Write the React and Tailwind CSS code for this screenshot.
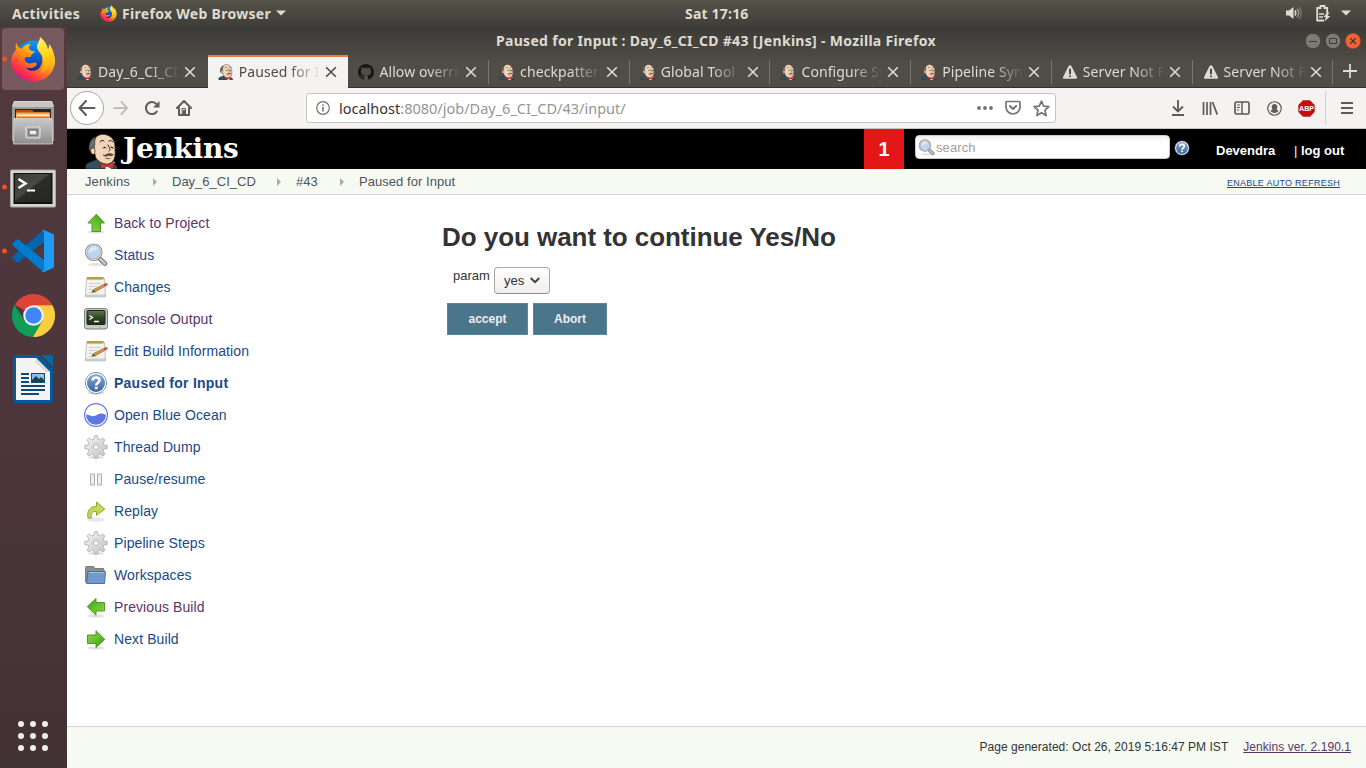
import React from "react";

const ubuntu = "font-['Noto_Sans','Open_Sans',sans-serif]";

function Firefox({ size, id }) {
  return (
    <svg width={size} height={size} viewBox="0 0 46 46">
      <defs>
        <linearGradient id={id + "a"} x1="0.85" y1="0.1" x2="0.2" y2="0.95">
          <stop offset="0" stopColor="#fff44f" />
          <stop offset="0.3" stopColor="#ffb418" />
          <stop offset="0.55" stopColor="#ff7a1c" />
          <stop offset="0.78" stopColor="#ff3647" />
          <stop offset="1" stopColor="#d8108c" />
        </linearGradient>
        <linearGradient id={id + "b"} x1="0.5" y1="0" x2="0.5" y2="1">
          <stop offset="0" stopColor="#0a9bff" />
          <stop offset="0.6" stopColor="#0a53c8" />
          <stop offset="1" stopColor="#2b1a78" />
        </linearGradient>
        <linearGradient id={id + "c"} x1="0.3" y1="0" x2="0.5" y2="1">
          <stop offset="0" stopColor="#fff36b" />
          <stop offset="0.55" stopColor="#ffd21c" />
          <stop offset="1" stopColor="#ff9a12" />
        </linearGradient>
      </defs>
      <circle cx="23" cy="21" r="16.5" fill={`url(#${id}b)`} />
      <path fill={`url(#${id}a)`} d="M6 7c-1 3 0 5 0 7C2.500 17.500 1 22 1 26c1 11 11 19.500 22.500 19.500C36 45.500 45 36 45 24.500c0-6-3-10-5-12l-9 3c2 5 2 13-2 17-4 3.500-11 3-13-1 4 1 7 1 10-2 1-1 1-3-1-3-3 0-5 2-8 0-2-1-3-3-2-5 2-1 4 0 6-1 0-3 3-3 4-5-3 0-5-1-6-3-1-2 1-3 2-4-4-1-7 1-9 4-2 0-4-1-6-6z" />
      <path fill={`url(#${id}c)`} d="M30 1c0 4-3 6-3 10 0 3 3 5 5 9 3 6 2 12-2 17 7-1 13-8 14-16 0-6-3-11-5-13 0 3 0 4-1 5-1-5-4-9-8-12z" />
    </svg>
  );
}

function Butler({ w, h, className = "" }) {
  return (
    <svg width={w} height={h} viewBox="0 0 34 36" className={className}>
      <path fill="#335061" stroke="#1b2a33" strokeWidth="0.8" d="M1 36c-1-3 0-5 2-6l10-4 16 5c3 1 3 3 3 5z" />
      <path fill="#f0f0ee" d="M14 28l7 8h5l4-7-8-2z" />
      <path fill="#f0d6b7" stroke="#3a2a20" strokeWidth="0.9" d="M8 8c3-6 9-8 14-6 6 2 8 7 8 12 0 6 1 10-2 14-3 4-8 4-13 1-3-2-5-4-5-8-3 0-5-2-4-5 0-3 1-5 2-8z" />
      <path fill="#6d6b6d" stroke="#2f2f2f" strokeWidth="0.7" d="M11 4C7 5 4 9 4 15c0 2 1 3 2 4 0-2 0-4 2-4l1 1c1-2 0-3 1-5-1-2 0-4 1-7z" />
      <path fill="#f0d6b7" stroke="#3a2a20" strokeWidth="0.7" d="M6 16c2-2 4-1 4 2 0 2-1 4-3 3-1-1-2-3-1-5z" />
      <path fill="none" stroke="#302520" strokeWidth="1" strokeLinecap="round" d="M15 9c1-2 3-2 4-1M24 8c2-1 3 0 4 1M18 15c1-1 2-1 3 0M26 14l2 1M23 12c2 4 3 5 1 6" />
      <circle cx="19.500" cy="14.500" r="0.800" fill="#222" />
      <circle cx="27" cy="14.500" r="0.800" fill="#222" />
      <path fill="#6a4a38" stroke="#302520" strokeWidth="0.500" d="M18 22c3 1 4-1.500 6.500-1.500 2 0 2.500 1 4 1-1.500 1.500-3.500 1.500-5 .7-1.500 1.300-4 1.300-5.500-.2z" />
      <path fill="none" stroke="#80302a" strokeWidth="0.900" d="M20.500 25c2 1 3.500 1 5 0" />
      <path fill="#d33833" stroke="#5d1512" strokeWidth="0.7" d="M16 30l6 2 6-3c1 2 1 5 0 7l-6-3-5 3c-2-2-2-4-1-6z" />
    </svg>
  );
}

function GitHub() {
  return (
    <svg width="16" height="16" viewBox="0 0 16 16">
      <path fill="#191717" d="M8 0C3.580 0 0 3.580 0 8c0 3.540 2.290 6.530 5.470 7.590.4.070.55-.17.55-.38 0-.19-.01-.82-.01-1.490-2.010.37-2.530-.49-2.690-.94-.09-.23-.48-.94-.82-1.130-.28-.15-.68-.52-.01-.53.63-.01 1.080.58 1.230.82.72 1.210 1.870.87 2.330.66.070-.52.28-.87.51-1.070-1.780-.2-3.640-.89-3.640-3.950 0-.87.31-1.590.82-2.150-.08-.2-.36-1.020.08-2.120 0 0 .67-.21 2.200.82.64-.18 1.320-.27 2-.27s1.360.09 2 .27c1.530-1.040 2.200-.82 2.200-.82.44 1.100.16 1.920.08 2.120.51.56.82 1.270.82 2.150 0 3.070-1.870 3.750-3.650 3.950.29.25.54.73.54 1.480 0 1.070-.01 1.930-.01 2.200 0 .21.15.46.55.38A8.010 8.010 0 0 0 16 8c0-4.420-3.580-8-8-8z" />
    </svg>
  );
}

function Warn() {
  return (
    <svg width="16" height="16" viewBox="0 0 16 16">
      <path fill="#dfdbd2" d="M8 1.200c.7 0 1.100.4 1.400.9l5.400 10.600c.6 1.200 0 2.100-1.200 2.100H2.400c-1.200 0-1.800-.9-1.200-2.100L6.600 2.100c.3-.5.700-.9 1.400-.9z" />
      <path stroke="#4a4842" strokeWidth="2" strokeLinecap="round" d="M8 5.500v4M8 12.200v.1" />
    </svg>
  );
}

function Tab({ icon, text, active, beforeActive }) {
  return (
    <div
      className={
        "relative flex h-[33px] w-[140.700px] shrink-0 items-center pl-[10px] " +
        (active ? "border-t-2 border-[#f07746] bg-[#f4f3f2] pb-[2px] text-[#4c4c4c]" : "border-b border-[#33322e] pt-px text-[#dfdbd2]")
      }
    >
      <div className="flex w-[21px] shrink-0 items-center">{icon}</div>
      <div className="w-[82px] overflow-hidden whitespace-nowrap text-[14px] leading-5 tracking-[0.1px] [mask-image:linear-gradient(to_right,black_50px,transparent_82px)]">
        {text}
      </div>
      <svg width="12" height="12" viewBox="0 0 12 12" className="ml-[4px] shrink-0" fill="none" stroke="currentColor" strokeWidth="1.600">
        <path d="M1.200 1.200l9.600 9.600M10.800 1.200L1.200 10.800" />
      </svg>
      {!active && !beforeActive && <div className="absolute right-0 top-[5px] h-[24px] w-px bg-[#77756f]" />}
    </div>
  );
}

const tabs = [
  { t: "Day_6_CI_CD", i: "j", beforeActive: true },
  { t: "Paused for In", i: "j", active: true },
  { t: "Allow overrid", i: "g" },
  { t: "checkpattern", i: "j" },
  { t: "Global Tool", i: "j" },
  { t: "Configure Sy", i: "j" },
  { t: "Pipeline Syn", i: "j" },
  { t: "Server Not F", i: "w" },
  { t: "Server Not F", i: "w" },
];

function TopBar() {
  return (
    <div className={"flex h-[27px] shrink-0 items-center bg-linear-to-b from-[#57534a] to-[#3e3d38] pb-px text-[14px] font-bold text-[#dfdbd2] " + ubuntu}>
      <div className="w-[100px] pl-[12px] tracking-[0.300px]">Activities</div>
      <Firefox size={17} id="ft" />
      <div className="ml-[5px] w-[149px] whitespace-nowrap tracking-[0.300px]">Firefox Web Browser</div>
      <svg width="10" height="6" viewBox="0 0 10 6" className="ml-[5px]"><path fill="#dfdbd2" d="M0 .5h10L5 5.500z" /></svg>
      <div className="ml-[399px] whitespace-nowrap tracking-[0.200px]">Sat 17:16</div>
      <div className="ml-auto flex items-center pr-[15px]">
        <svg width="16" height="14" viewBox="0 0 16 14" fill="none">
          <path fill="#dfdbd2" d="M0 4.500h3L7.500 1v12L3 9.500H0z" />
          <path stroke="#dfdbd2" strokeWidth="1.500" d="M9 4.500c1 1.500 1 3.500 0 5" />
          <path stroke="#aaa79f" strokeWidth="1.300" d="M11 2.800c2 2.500 2 6 0 8.400" />
          <path stroke="#7d7a73" strokeWidth="1.300" d="M13.200 1c2.600 3.500 2.600 8.500 0 12" />
        </svg>
        <svg width="15" height="17" viewBox="0 0 15 17" className="ml-[14px]" fill="none">
          <path stroke="#dfdbd2" strokeWidth="1.800" d="M11.200 8V3H8.500V1h-4v2H1.200v12.500H8" />
          <path stroke="#dfdbd2" strokeWidth="1.500" d="M3 9h5M3 12h4" />
          <path fill="#dfdbd2" d="M11 7.500L7.500 12h2.300L8.500 16.500 14.500 11h-3l1.800-3.500z" />
        </svg>
        <svg width="10" height="6" viewBox="0 0 10 6" className="ml-[10px]"><path fill="#dfdbd2" d="M0 .5h10L5 5.500z" /></svg>
      </div>
    </div>
  );
}

function Files() {
  return (
    <svg width="44" height="46" viewBox="0 0 44 46">
      <defs>
        <linearGradient id="fg" x1="0" y1="0" x2="0" y2="1"><stop offset="0" stopColor="#c9c9c9" /><stop offset="1" stopColor="#8d8d8d" /></linearGradient>
      </defs>
      <path fill="#d8d8d6" d="M3 1h38l2 5v34H1V6z" />
      <path fill="#9c9c9a" d="M1 6h42v35H1z" />
      <path fill="#c6c6c4" d="M3 2h38l1.500 5h-41z" />
      <path fill="#2a2422" d="M4 9h36v11H4z" />
      <path fill="#b9501c" d="M5 10h16l2 2h15v8H5z" />
      <path fill="#f6a54a" d="M5 12.500h34V20H5z" />
      <path fill="#fff0dc" d="M6 14.500h32v1.500H6z" />
      <path fill="#e0761f" d="M6 17h32v2H6z" />
      <path fill="url(#fg)" stroke="#d5d5d5" strokeWidth="0.8" d="M3 18.500h38l.5 25.500h-39z" />
      <rect x="15" y="27" width="14" height="11" rx="1.500" fill="#a3a3a3" stroke="#e4e4e4" strokeWidth="1.200" />
      <rect x="18" y="30" width="8" height="5" fill="#efefef" stroke="#555" />
    </svg>
  );
}

function Dock() {
  const dot = <span className="absolute left-[2px] top-1/2 h-[5px] w-[5px] -translate-y-1/2 rounded-full bg-[#e95420]" />;
  const slot = "relative flex h-[64px] w-[66px] items-center justify-center";
  return (
    <div className="flex w-[67px] shrink-0 flex-col bg-linear-to-b from-[#523a3f] via-[#4c363b] to-[#413236]">
      <div className={slot}>
        <div className="flex h-[62px] w-[62px] items-center justify-center rounded-[4px] bg-[#75595e]"><Firefox size={46} id="fd" /></div>
        {dot}
      </div>
      <div className={slot}><Files /></div>
      <div className={slot}>
        <svg width="46" height="40" viewBox="0 0 46 40" className="relative top-[2px]">
          <defs><linearGradient id="tg" x1="0" y1="0" x2="1" y2="1"><stop offset="0" stopColor="#3b3b3b" /><stop offset="0.45" stopColor="#484846" /><stop offset="0.5" stopColor="#2c2c2b" /><stop offset="1" stopColor="#242424" /></linearGradient></defs>
          <rect x="0.500" y="1" width="45" height="37" rx="1" fill="#d3d3d1" stroke="#a9a9a7" />
          <rect x="3.500" y="4" width="39" height="31" fill="#111" />
          <rect x="5" y="5" width="36" height="28" fill="url(#tg)" />
          <path fill="none" stroke="#fff" strokeWidth="2.500" d="M8.500 10l7 4.500-7 4.500" />
          <path stroke="#fff" strokeWidth="2" d="M17 21.500h8" />
        </svg>
        {dot}
      </div>
      <div className={slot}>
        <svg width="42" height="42" viewBox="0 0 42 42">
          <path fill="#0065a9" d="M32 0v12L7 32c-1 .8-2 .8-3 0l-3-2.800c-1-1-1-2 0-3L30 1z" />
          <path fill="#007acc" d="M32 42V30L7 10c-1-.8-2-.8-3 0l-3 2.800c-1 1-1 2 0 3L30 41z" />
          <path fill="#1f9cf0" d="M32 0l9 4c.7.4 1 1 1 2v30c0 1-.3 1.600-1 2l-9 4c-1 .3-2 0-3-1 1.500 1 3 .3 3-2V3c0-2.300-1.500-3-3-2 1-1 2-1.300 3-1z" />
        </svg>
        {dot}
      </div>
      <div className={slot}>
        <svg width="45" height="45" viewBox="0 0 48 48">
          <path fill="#db4437" d="M24 24L4.100 12.500A23 23 0 0 1 43.900 12.500L44 13H24z" />
          <path fill="#0f9d58" d="M24 24l-9.500 5.500L3.800 12.900A23 23 0 0 0 24 47l9.500-17.500z" />
          <path fill="#ffcd40" d="M24 13h20.200A23 23 0 0 1 23.500 47l10-17.500z" />
          <circle cx="24" cy="24" r="11" fill="#f1f1f1" />
          <circle cx="24" cy="24" r="8.800" fill="#4285f4" />
        </svg>
      </div>
      <div className={slot}>
        <svg width="40" height="48" viewBox="0 0 40 48">
          <path fill="#02599c" d="M2 0h24l14 14v32a2 2 0 0 1-2 2H2a2 2 0 0 1-2-2V2a2 2 0 0 1 2-2z" />
          <path fill="#0369a3" d="M28 0h10a2 2 0 0 1 2 2v10z" />
          <path fill="#f4f4f4" d="M3 3h20l14 14v28H3z" />
          <path fill="#dcdcdc" d="M23 3l14 14h-4L22 7z" />
          <path stroke="#0b4c7a" strokeWidth="2" d="M8 19h8M8 23h8M8 27h8M8 31h24M8 35h24M8 39h18" />
          <rect x="18.500" y="18.500" width="13" height="9" fill="#7ec1f0" stroke="#0b4c7a" />
          <path fill="#2b3a40" d="M19 27v-2l4-4 3 3 2-2 3 3v2z" />
          <circle cx="28.500" cy="20.500" r="1" fill="#ffd34d" />
        </svg>
      </div>
      <div className="mt-auto flex h-[64px] w-[66px] items-center justify-center">
        <div className="grid grid-cols-3 gap-[6px]">
          {Array.from({ length: 9 }, (_, i) => <span key={i} className="h-[6px] w-[6px] rounded-full bg-[#f0eeec]" />)}
        </div>
      </div>
    </div>
  );
}

function WindowHeader() {
  return (
    <div className={"shrink-0 bg-linear-to-b from-[#3c3b37] to-[#504d46] to-60% " + ubuntu}>
      <div className="flex h-[28px] items-center pr-[5px] text-[14px] font-bold text-[#dfdbd2]">
        <div className="ml-[429px] whitespace-nowrap pb-[2px] tracking-[0.310px]">Paused for Input : Day_6_CI_CD #43 [Jenkins] - Mozilla Firefox</div>
        <div className="ml-auto flex gap-[4px]">
          <svg width="16" height="16" viewBox="0 0 16 16"><circle cx="8" cy="8" r="7.700" fill="#7b7a73" stroke="#34332e" strokeWidth="0.600" /><path stroke="#3c3b37" d="M4 8.500h8" /></svg>
          <svg width="16" height="16" viewBox="0 0 16 16"><circle cx="8" cy="8" r="7.700" fill="#7b7a73" stroke="#34332e" strokeWidth="0.600" /><path fill="none" stroke="#3c3b37" d="M4.500 5.500h7v5h-7z" /></svg>
          <svg width="16" height="16" viewBox="0 0 16 16"><circle cx="8" cy="8" r="7.700" fill="#ee6437" stroke="#8c3418" strokeWidth="0.400" /><path stroke="#3c2b20" strokeWidth="1.200" d="M5.200 5.200l5.600 5.600M10.800 5.200l-5.600 5.600" /></svg>
        </div>
      </div>
      <div className="flex h-[33px]">
        {tabs.map((t, k) => (
          <Tab key={k} text={t.t} active={t.active} beforeActive={t.beforeActive} icon={t.i === "j" ? <Butler w={16} h={16} /> : t.i === "g" ? <GitHub /> : <Warn />} />
        ))}
        <div className="flex flex-1 items-center justify-center border-b border-[#33322e]">
          <svg width="14" height="14" viewBox="0 0 14 14"><path stroke="#dfdbd2" strokeWidth="1.800" d="M7 0v14M0 7h14" /></svg>
        </div>
      </div>
    </div>
  );
}

function NavBar() {
  const g = "#5c5c5c";
  return (
    <div className={"flex h-[41px] shrink-0 items-center border-b border-[#c8c6c3] bg-[#f4f3f2] " + ubuntu}>
      <div className="ml-[3px] flex h-[34px] w-[34px] items-center justify-center rounded-full border border-[#a8a6a3] bg-white">
        <svg width="18" height="16" viewBox="0 0 18 16" fill="none" stroke={g} strokeWidth="2" strokeLinecap="round" strokeLinejoin="round"><path d="M8 1L1.500 8 8 15M2 8h14.500" /></svg>
      </div>
      <svg width="17" height="14" viewBox="0 0 18 16" className="ml-[8px]" fill="none" stroke="#b9b8b7" strokeWidth="2" strokeLinecap="round" strokeLinejoin="round"><path d="M10 1l6.500 7-6.500 7M16 8H1.500" /></svg>
      <svg width="16" height="16" viewBox="0 0 16 16" className="ml-[15px]" fill="none"><path stroke={g} strokeWidth="2" d="M13.200 11A6 6 0 1 1 12.500 4.200" /><path fill={g} d="M15.500 1v6.500H9z" /></svg>
      <svg width="16" height="16" viewBox="0 0 16 16" className="ml-[16px]" fill="none" stroke={g} strokeWidth="2" strokeLinejoin="round" strokeLinecap="round"><path d="M1 8l7-7 7 7M3 8v7h10V8" /><path strokeWidth="2" strokeLinecap="butt" d="M8 10v5" /><path strokeWidth="1" d="M6.500 8.500h3v5.500h-3z" /></svg>
      <div className="ml-[114px] flex h-[30px] w-[750px] items-center rounded-[3px] border border-[#c6c4c1] bg-white pl-[9px] pr-[5px]">
        <svg width="14" height="14" viewBox="0 0 14 14" fill="none" stroke="#737373"><circle cx="7" cy="7" r="6.300" strokeWidth="1.200" /><path strokeWidth="1.600" d="M7 6v4.500M7 3.300v1.500" /></svg>
        <div className="ml-[9px] mt-px whitespace-nowrap text-[14.500px] text-[#959595]"><span className="text-[#333]">localhost</span>:8080/job/Day_6_CI_CD/43/input/</div>
        <svg width="16" height="4" viewBox="0 0 16 4" className="ml-auto" fill="#737373"><circle cx="2" cy="2" r="1.900" /><circle cx="8" cy="2" r="1.900" /><circle cx="14" cy="2" r="1.900" /></svg>
        <svg width="16" height="16" viewBox="0 0 16 16" className="ml-[12px]" fill="none" stroke="#737373" strokeLinecap="round" strokeLinejoin="round"><path strokeWidth="1.700" d="M2 1.500h12a1 1 0 0 1 1 1V7A7 7 0 0 1 1 7V2.500a1 1 0 0 1 1-1z" /><path strokeWidth="1.900" d="M4.800 6L8 9l3.200-3" /></svg>
        <svg width="17" height="17" viewBox="0 0 17 17" className="ml-[12px]" fill="none" stroke="#737373" strokeWidth="1.700" strokeLinejoin="round"><path d="M8.500 1.200l2.200 4.900 5.200.5-3.900 3.600 1.100 5.400-4.600-2.800-4.600 2.800L5 10.200 1.100 6.600l5.200-.5z" /></svg>
      </div>
      <svg width="14" height="16" viewBox="0 0 14 16" className="ml-[115px]" fill="none" stroke={g} strokeWidth="1.900"><path d="M7 0v11.500M2 6.500l5 5 5-5M1 15h12" /></svg>
      <svg width="16" height="14" viewBox="0 0 16 14" className="ml-[17px]" stroke={g} strokeWidth="1.700"><path d="M1.500 1v13M5 1v13M8.500 1v13M10.500 1l4.800 12.600" /></svg>
      <svg width="16" height="14" viewBox="0 0 16 14" className="ml-[16px]" fill="none" stroke={g} strokeWidth="1.700"><rect x="1" y="1" width="14" height="12" rx="1.500" /><path d="M8 1v12" strokeWidth="1.500" /><path d="M3 4h3M3 6.500h3M3 9h2" strokeWidth="1" /></svg>
      <svg width="15" height="15" viewBox="0 0 16 16" className="ml-[17px]" fill="none"><circle cx="8" cy="8" r="7.200" stroke={g} strokeWidth="1.300" /><path fill={g} d="M8 3.200c2 0 3 1.500 3 3.200 0 1.300-.5 2-1 2.600 1.400.5 2 .9 2.300 1.600A5.200 5.200 0 0 1 3.700 10.600C4 9.900 4.600 9.500 6 9c-.5-.6-1-1.300-1-2.600 0-1.700 1-3.200 3-3.200z" /></svg>
      <svg width="17" height="17" viewBox="0 0 17 17" className="ml-[16px]"><path fill="#c70d0c" d="M5 .3h7L16.700 5v7L12 16.700H5L.3 12V5z" /><text x="8.500" y="11.300" fontSize="7.800" fontWeight="bold" textAnchor="middle" fill="#fff" fontFamily="Liberation Sans" textLength="15" lengthAdjust="spacingAndGlyphs">ABP</text></svg>
      <div className="ml-[10px] h-[34px] w-px bg-[#d4d2cf]" />
      <svg width="12" height="12" viewBox="0 0 12 12" className="ml-[15px]" stroke={g} strokeWidth="1.900"><path d="M0 1h12M0 6h12M0 11h12" /></svg>
    </div>
  );
}

function Help({ size, id }) {
  return (
    <svg width={size} height={size} viewBox="0 0 24 24">
      <defs><linearGradient id={id} x1="0" y1="0" x2="0" y2="1"><stop offset="0" stopColor="#86a9d2" /><stop offset="1" stopColor="#3a65a2" /></linearGradient></defs>
      <ellipse cx="12" cy="22" rx="9" ry="1.800" fill="#000" opacity="0.120" />
      <circle cx="12" cy="12" r="10.600" fill="#fff" stroke="#6d8ab3" strokeWidth="0.900" />
      <circle cx="12" cy="12" r="9" fill={`url(#${id})`} />
      <path fill="none" stroke="#fff" strokeWidth="2.600" d="M8.500 9.500C8.800 7 10.500 6.500 12 6.500c2 0 3.500 1 3.500 2.800 0 2.400-3.300 2.500-3.300 5.200" />
      <rect x="10.800" y="15.800" width="2.800" height="2.500" rx="0.600" fill="#fff" />
    </svg>
  );
}

function Magnifier({ size }) {
  return (
    <svg width={size} height={size} viewBox="0 0 24 24">
      <ellipse cx="12" cy="21.500" rx="8" ry="1.800" fill="#000" opacity="0.100" />
      <path stroke="#777" strokeWidth="4.600" strokeLinecap="round" d="M16 16l5 4.500" />
      <path stroke="#c6c6c4" strokeWidth="2.600" strokeLinecap="round" d="M16 16l5 4.500" />
      <circle cx="9.800" cy="9.200" r="7.700" fill="#bcd6f2" stroke="#8b8d8a" strokeWidth="2.200" />
      <circle cx="9.800" cy="9.200" r="7.400" fill="none" stroke="#e4e6e4" strokeWidth="1" />
      <path fill="#e6f1fc" opacity="0.700" d="M4.500 9a5.500 5.500 0 0 1 10-3c-4 0-6 4-10 3z" />
    </svg>
  );
}

function Note() {
  return (
    <svg width="24" height="24" viewBox="0 0 24 24">
      <path fill="#f2f2f0" stroke="#bdbdb9" strokeWidth="0.900" d="M2.500 3.500h18l1 17.500h-20z" />
      <path fill="#d8d8d5" stroke="#a9a9a5" strokeWidth="0.500" d="M1.500 20h20v2h-20z" />
      <rect x="3" y="2" width="17" height="2.500" fill="#d9bf58" />
      <path stroke="#94792b" strokeDasharray="1 1" strokeWidth="2.500" d="M3.500 3.200h16" />
      <path stroke="#cfcfcd" d="M5 8.500h12M5 11.500h8M5 14.500h4M5 17.500h8" />
      <path stroke="#7d5417" strokeWidth="3" d="M10 15.800l10-5.300" />
      <path stroke="#d99a3b" strokeWidth="2" d="M10 15.800l10-5.300" />
      <path fill="#4a4440" d="M7.500 17.500l1.800-3 1.700 2.500z" />
      <path stroke="#d65046" strokeWidth="3" strokeLinecap="round" d="M21 10l1-.5" />
    </svg>
  );
}

function Gear() {
  return (
    <svg width="24" height="24" viewBox="0 0 24 24">
      <defs><linearGradient id="gg" x1="0" y1="0" x2="1" y2="1"><stop offset="0" stopColor="#f4f4f4" /><stop offset="1" stopColor="#c2c2c2" /></linearGradient></defs>
      <ellipse cx="12" cy="22.500" rx="8" ry="1.400" fill="#000" opacity="0.120" />
      <path fill="url(#gg)" stroke="#acacac" strokeWidth="0.800" strokeLinejoin="round" d="M10.500.8h3l.6 3.300 2 .8 2.800-1.900 2.100 2.100-1.900 2.800.8 2 3.300.6v3l-3.300.6-.8 2 1.900 2.800-2.100 2.100-2.800-1.900-2 .8-.6 3.300h-3l-.6-3.300-2-.8L5.100 21 3 18.900l1.900-2.800-.8-2-3.300-.6v-3l3.300-.6.8-2L3 5.100 5.100 3l2.800 1.900 2-.8z" />
      <circle cx="12" cy="12" r="4.500" fill="#e8e8e8" stroke="#cecece" />
      <circle cx="12" cy="12" r="2.600" fill="#fff" stroke="#aaa" />
    </svg>
  );
}

function Arrow({ dir }) {
  const rot = dir === "up" ? "rotate(-90 12 12)" : dir === "left" ? "rotate(180 12 12)" : undefined;
  return (
    <svg width="24" height="24" viewBox="0 0 24 24">
      <defs><linearGradient id={"ar" + dir} x1="0" y1="0" x2="1" y2="1"><stop offset="0" stopColor="#8fdc4a" /><stop offset="1" stopColor="#3da012" /></linearGradient></defs>
      <ellipse cx="12" cy="21" rx="8" ry="1.600" fill="#000" opacity="0.120" />
      <path transform={rot} fill={`url(#ar${dir})`} stroke="#43921b" strokeWidth="0.900" strokeLinejoin="round" d="M3.500 8h8.500V3.800L20.700 12.300 12 20.500V16.500H3.500z" />
    </svg>
  );
}

const icons = {
  up: <Arrow dir="up" />,
  left: <Arrow dir="left" />,
  right: <Arrow dir="right" />,
  search: <Magnifier size={24} />,
  note: <Note />,
  gear: <Gear />,
  help: <Help size={24} id="h24" />,
  console: (
    <svg width="24" height="24" viewBox="0 0 24 24">
      <defs><linearGradient id="cg" x1="0" y1="0" x2="0" y2="1"><stop offset="0" stopColor="#5e7850" /><stop offset="0.500" stopColor="#32462a" /><stop offset="1" stopColor="#1d2c18" /></linearGradient></defs>
      <rect x="0.500" y="1.500" width="23" height="20.500" rx="2.500" fill="#c8c8c4" stroke="#7f817c" />
      <rect x="3" y="3.500" width="18" height="14" rx="1" fill="url(#cg)" stroke="#1c2418" />
      <path fill="none" stroke="#fff" strokeWidth="1.300" d="M5.500 8.500l3 2-3 2M10 14.500h5" />
      <circle cx="16" cy="20" r="0.700" fill="#6ad02c" />
    </svg>
  ),
  ocean: (
    <svg width="24" height="24" viewBox="0 0 24 24">
      <circle cx="12" cy="12" r="11.400" fill="#fff" stroke="#6076e4" strokeWidth="1.200" />
      <path fill="#6076e4" d="M2 11.500c3 0 5 2.300 8 1.600 3-.7 5-3 8-2.600 1.700.2 3 1 4 1.500A10 10 0 0 1 2 11.500z" />
    </svg>
  ),
  pause: (
    <svg width="24" height="24" viewBox="0 0 24 24" fill="#ededeb" stroke="#b0b0ae"><rect x="6.500" y="7" width="4" height="11" /><rect x="13.500" y="7" width="4" height="11" /></svg>
  ),
  replay: (
    <svg width="24" height="24" viewBox="0 0 24 24">
      <ellipse cx="12" cy="20.500" rx="9" ry="2.200" fill="#000" opacity="0.090" />
      <path fill="#c3d758" stroke="#8b9e28" strokeWidth="0.900" strokeLinejoin="round" d="M4 19c-1.500-7 2-11.500 8.500-11.800V3L20.800 10l-8.300 6.500v-4C8 12.300 6 14.500 7.500 19z" />
    </svg>
  ),
  folder: (
    <svg width="24" height="24" viewBox="0 0 24 24">
      <path fill="#8d8f8c" stroke="#6a6c69" strokeWidth="0.800" d="M1.500 19V4.500c0-.6.400-1 1-1h7l1.500 2h8c.5 0 1 .4 1 1V19z" />
      <path fill="#729bcb" stroke="#40689b" strokeWidth="0.900" d="M4 8.500h17.500L20.500 20.500H2.500z" />
      <path stroke="#a4c3e6" d="M5 9.500h15.500" />
    </svg>
  ),
};

const tasks = [
  ["up", "Back to Project", "v"],
  ["search", "Status"],
  ["note", "Changes"],
  ["console", "Console Output", "v"],
  ["note", "Edit Build Information"],
  ["help", "Paused for Input", "b"],
  ["ocean", "Open Blue Ocean"],
  ["gear", "Thread Dump"],
  ["pause", "Pause/resume"],
  ["replay", "Replay"],
  ["gear", "Pipeline Steps"],
  ["folder", "Workspaces"],
  ["left", "Previous Build", "v"],
  ["right", "Next Build"],
];

function Sep() {
  return <svg width="4" height="8" viewBox="0 0 4 8" className="ml-[22px] mr-[15px]"><path fill="#a9aaa6" d="M0 0l4 4-4 4z" /></svg>;
}

function Jenkins() {
  return (
    <div className="flex min-h-0 flex-1 flex-col bg-white font-['Liberation_Sans',Arial,sans-serif]">
      <div className="flex h-[40px] shrink-0 bg-black">
        <Butler w={34} h={36} className="ml-[18px] mt-[4px]" />
        <div className="ml-[4px] mt-[2px] font-['DejaVu_Serif',serif] text-[28px] font-bold leading-[36px] tracking-[-0.300px] text-white">Jenkins</div>
        <div className="ml-auto flex w-[40px] items-center justify-center bg-[#e31716] text-[20px] font-bold text-white">1</div>
        <div className="ml-[11px] mt-[6px] flex h-[24px] w-[255px] items-center rounded-[4px] border border-[#ccc] bg-linear-to-b from-[#eee] to-white to-30% pl-[2px] text-[13px] text-[#a0a0a0]">
          <Magnifier size={17} /><span className="ml-px mt-px tracking-[0.100px]">search</span>
        </div>
        <div className="ml-[4px] mt-[11px]"><Help size={16} id="h16" /></div>
        <div className="ml-[26px] mt-[14px] w-[59px] text-[13px] font-bold leading-[16px] text-white">Devendra</div>
        <div className="ml-[19px] mr-[20px] mt-[14px] w-[52px] whitespace-nowrap text-[13px] leading-[16px] text-white">| <b>log out</b></div>
      </div>
      <div className="flex h-[26px] shrink-0 items-center border-b border-[#d3d7cf] bg-[#f6faf2] pl-[18px] pr-[26px] pt-px text-[13px] text-[#4d545d]">
        <span className="w-[46px] tracking-[0.120px]">Jenkins</span><Sep /><span className="w-[83px]">Day_6_CI_CD</span><Sep /><span className="w-[22px]">#43</span><Sep /><span className="tracking-[0.050px]">Paused for Input</span>
        <a className="ml-auto mt-[3px] text-[9px] tracking-[0.270px] text-[#204a87] underline">ENABLE AUTO REFRESH</a>
      </div>
      <div className="flex flex-1">
        <div className="w-[375px] shrink-0 pl-[17px] pt-[13px]">
          {tasks.map(([ic, label, k]) => (
            <div key={label} className="flex h-[32px] items-start">
              <div className="mt-[3px]">{icons[ic]}</div>
              <span className={"ml-[6px] mt-[5px] whitespace-nowrap text-[14px] leading-5 " + (k === "v" ? "tracking-[0.080px] text-[#5c3566]" : k === "b" ? "font-bold tracking-[0.240px] text-[#204a87]" : "tracking-[0.090px] text-[#204a87]")}>{label}</span>
            </div>
          ))}
        </div>
        <div className="pt-[26px] text-[#333]">
          <h1 className="text-[26px] font-bold leading-[32px] tracking-[-0.050px]">Do you want to continue Yes/No</h1>
          <div className="mt-[14px] flex pl-[11px] text-[13px]">
            <span className="w-[37px] leading-[18px]">param</span>
            <div className="ml-[4px] flex h-[27px] w-[56px] items-center rounded-[4px] border border-[#aaa8a5] border-b-[#8f8d8a] bg-linear-to-b from-white to-[#efeeec] pl-[9px]">
              yes
              <svg width="10" height="7" viewBox="0 0 10 7" className="ml-[6px]" fill="none" stroke="#444" strokeWidth="2"><path d="M.7 1L5 5.200 9.300 1" /></svg>
            </div>
          </div>
          <div className="mt-[9px] flex gap-[5px] pl-[5px] text-[12px] font-bold text-[#eee]">
            <div className="flex h-[32px] w-[81px] items-center justify-center border border-[#5788a1] bg-[#4b758b]">accept</div>
            <div className="flex h-[32px] w-[74px] items-center justify-center border border-[#5788a1] bg-[#4b758b]">Abort</div>
          </div>
        </div>
      </div>
      <div className="flex h-[42px] shrink-0 items-center justify-end gap-[15px] border-t border-[#d3d7cf] bg-[#f6faf2] pb-[2px] pr-[15px] text-[12px] text-[#333]">
        <span className="tracking-[0.030px]">Page generated: Oct 26, 2019 5:16:47 PM IST</span>
        <a className="tracking-[0.050px] text-[#5c3566] underline">Jenkins ver. 2.190.1</a>
      </div>
    </div>
  );
}

export default function App() {
  return (
    <div className="flex h-[768px] w-[1366px] flex-col overflow-hidden">
      <TopBar />
      <div className="flex min-h-0 flex-1">
        <Dock />
        <div className="flex min-w-0 flex-1 flex-col">
          <WindowHeader />
          <NavBar />
          <Jenkins />
        </div>
      </div>
    </div>
  );
}
